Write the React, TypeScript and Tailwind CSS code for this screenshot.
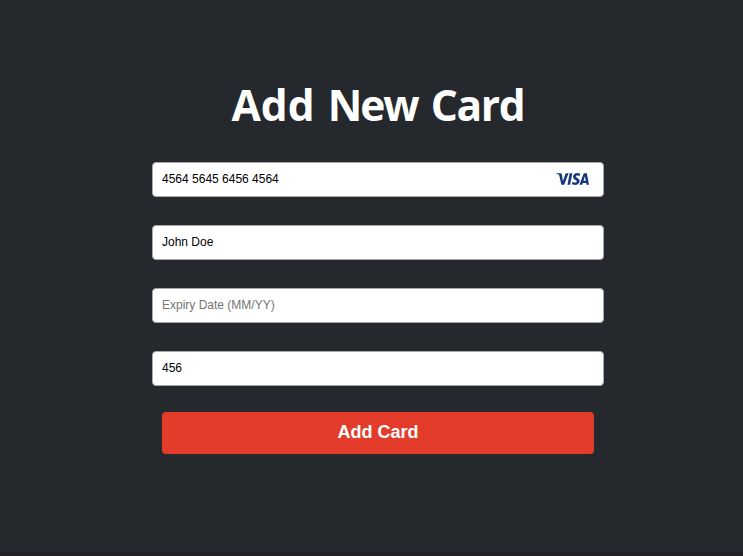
import { SiVisa } from "react-icons/si";

const fields = [
  { id: "number", placeholder: "Card Number", value: "4564 5645 6456 4564" },
  { id: "name", placeholder: "Name on Card", value: "John Doe" },
  { id: "expiry", placeholder: "Expiry Date (MM/YY)", value: "" },
  { id: "cvv", placeholder: "CVV", value: "456" },
];

export default function App() {
  return (
    <main className="flex h-[556px] w-[743px] flex-col items-center border-b-4 border-[#212327] bg-[#25282c] pl-[13px] font-['Liberation_Sans',Arial,sans-serif]">
      <h1 className="mt-[75px] flex h-[87px] gap-[13px] font-['Open_Sans','Noto_Sans',sans-serif] text-[42.5px] leading-[60px] font-bold text-white">
        <span>Add</span>
        <span className="tracking-[-2px]">New</span>
        <span className="tracking-[-1.3px]">Card</span>
      </h1>
      <form className="flex w-[452px] flex-col items-center">
        <div className="flex w-full flex-col gap-7">
          {fields.map((f) => (
            <div key={f.id} className="flex h-[35px] items-center rounded-[4px] border border-[#a9a9a9] bg-white pr-[14px] pb-[2px] pl-[9px]">
              <input
                className="min-w-0 flex-1 bg-transparent text-[12px] leading-[16px] text-black outline-none placeholder:text-[#757575]"
                placeholder={f.placeholder}
                defaultValue={f.value}
              />
              {f.id === "number" && (
                <SiVisa className="h-3 w-[33px] text-[#14377d]" viewBox="0 8.1 24 7.8" preserveAspectRatio="none" />
              )}
            </div>
          ))}
        </div>
        <button type="button" className="mt-[26px] h-[42px] w-[432px] rounded-[4px] bg-[#e43c2b] pb-[2px] text-[18px] font-bold text-white">
          Add Card
        </button>
      </form>
    </main>
  );
}
